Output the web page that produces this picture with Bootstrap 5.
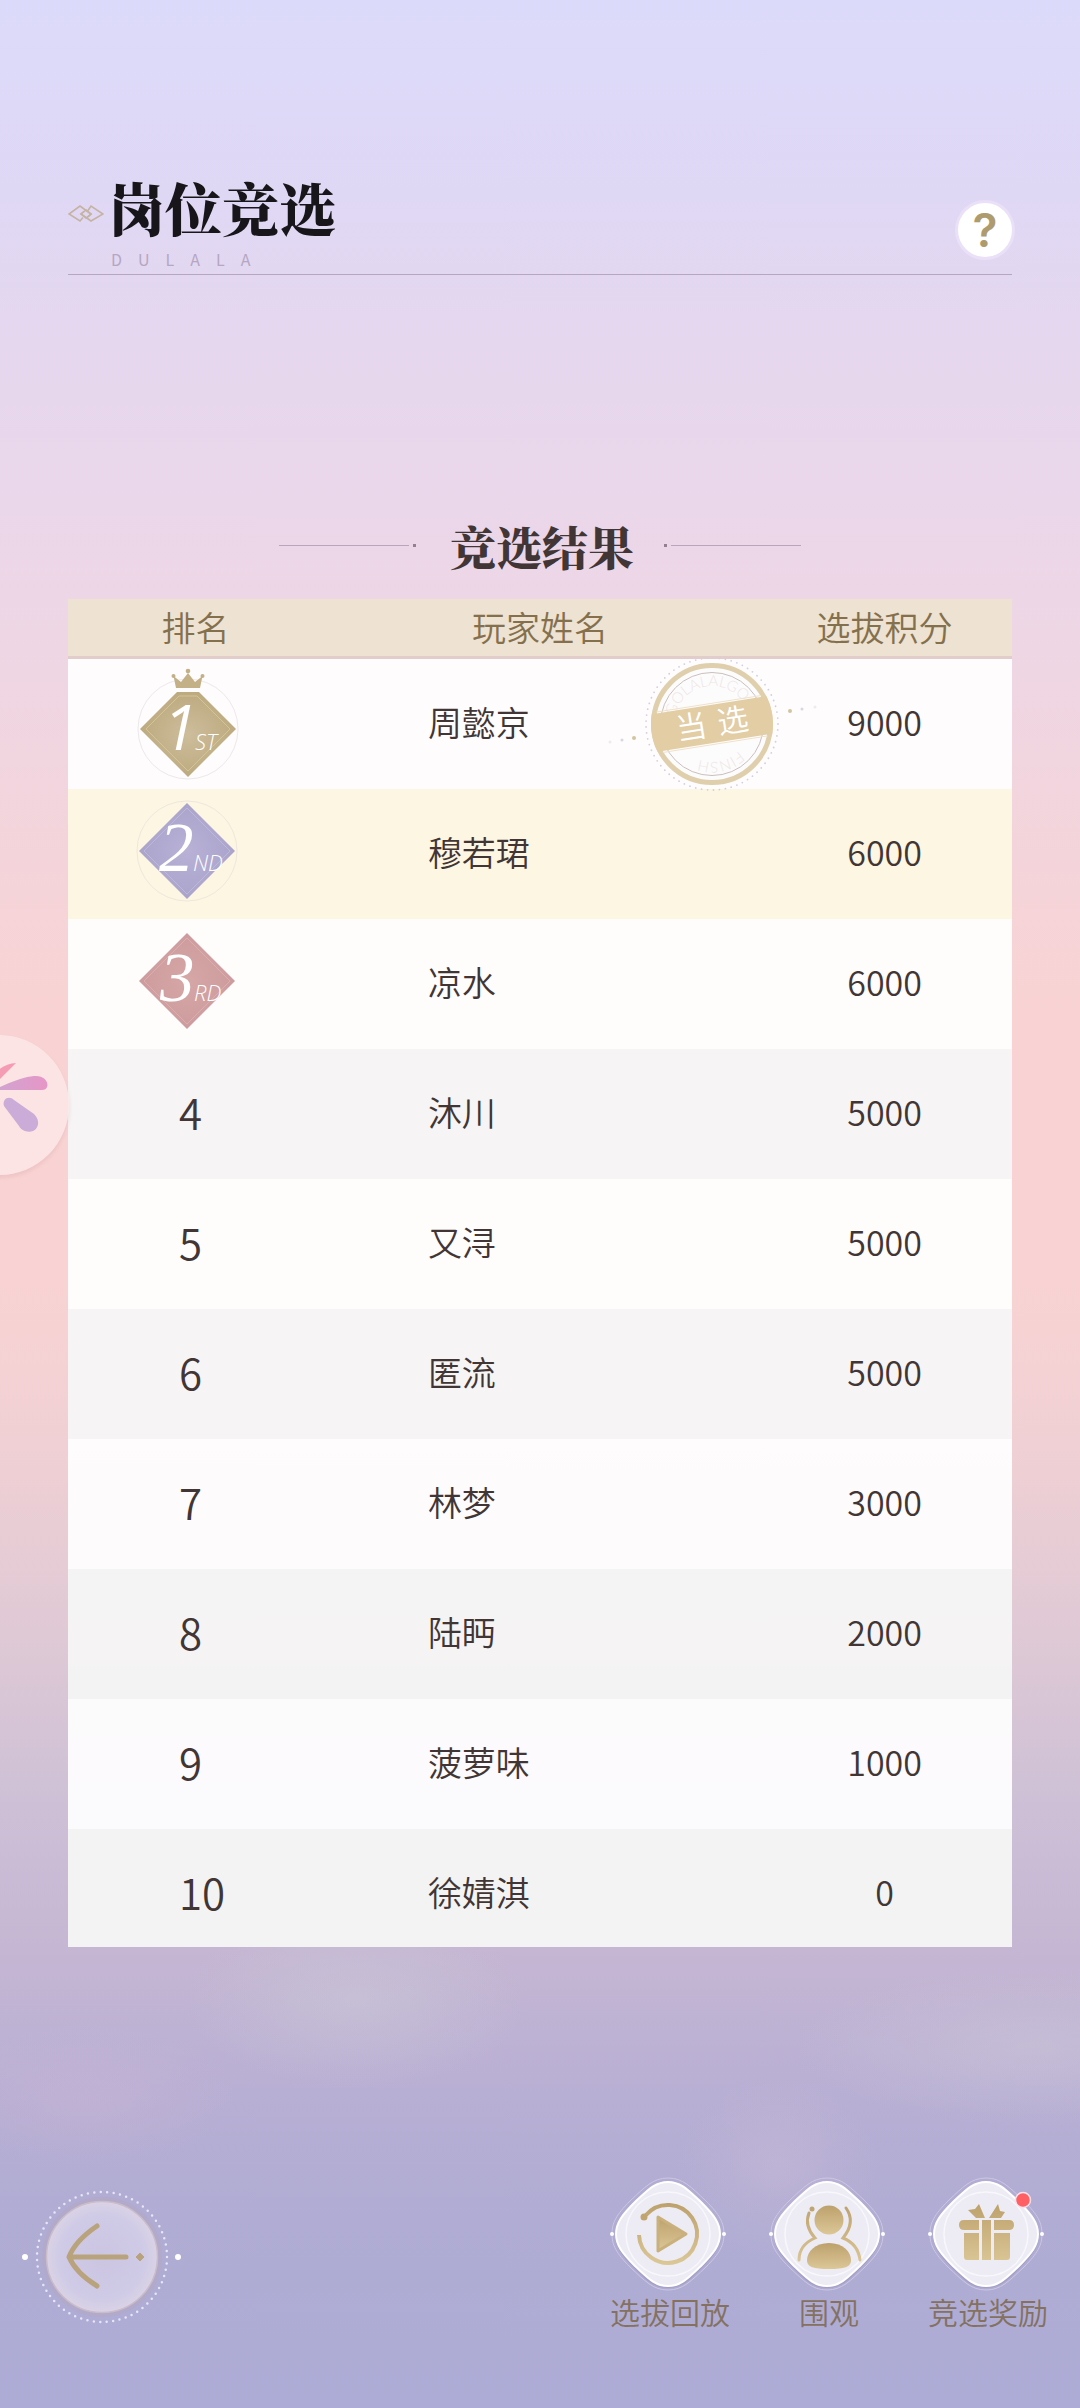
<!DOCTYPE html>
<html lang="zh-CN">
<head>
<meta charset="utf-8">
<meta name="viewport" content="width=device-width, initial-scale=1">
<title>岗位竞选</title>
<link rel="stylesheet" href="https://cdn.jsdelivr.net/npm/bootstrap@5.3.0/dist/css/bootstrap.min.css">
<style>
:root{--ink:#413535;--gold:#84704c}
body{font-family:"Noto Sans CJK SC","Noto Sans",sans-serif;color:var(--ink);overflow-x:hidden;
 background:
 radial-gradient(ellipse 170px 90px at 33% 83%,rgba(205,205,216,.45),transparent),
 radial-gradient(ellipse 240px 80px at 96% 85%,rgba(205,200,216,.5),transparent),
 radial-gradient(ellipse 100px 90px at 72% 90%,rgba(200,186,215,.5),transparent),
 radial-gradient(ellipse 150px 70px at 8% 87%,rgba(200,180,212,.5),transparent),
 linear-gradient(#dcdafa 0%,#dfd8f5 8%,#e4d7ef 13%,#ead7eb 20%,#efd6e3 28%,#f4d4da 36%,#f9d3d3 42%,#f9d3d3 53%,#f0d0d4 60%,#e1cad5 67%,#cdc0d6 75%,#c5b6d3 81%,#b8afd4 87%,#b0acd3 92%,#adacd6 100%)}
.serif-title{font-family:"Noto Serif CJK SC","Noto Sans CJK SC",serif;font-weight:900}
.page-wrap{padding:174px 68px 0}
.head-bar{border-bottom:1px solid #b7a5c4;padding-bottom:5px}
.head-name{font-size:57px;line-height:64px;color:#18161a}
.head-sub{font-size:16px;line-height:20px;letter-spacing:16px;color:#b5a6c2;margin:11px 0 0 43px}
.help-btn{width:60px;height:60px;border-radius:50%;border:3px solid #eae0f7;background:#fff;color:#ae9b6e;font:600 46px/54px Inter,sans-serif;margin:0 -3px 9px 0}
.result-head{margin-top:240px;margin-bottom:24px;gap:30px}
.result-name{font-size:46px;line-height:60px}
.rule-line{width:130px;height:1px;background:#b9a4bb}
.rule-dot{width:3px;height:3px;background:#937f90}
.rank-table{table-layout:fixed}
.rank-table th{height:60px;padding:0 0 4px;background:#eee2d2;box-shadow:inset 0 -3px #e3cdcb;color:var(--gold);font-weight:350;font-size:34px;line-height:50px;text-align:center}
.rank-table td{height:130px;padding:0 0 4px;font-weight:350;font-size:34px;line-height:50px;background:rgba(255,255,255,.92)}
.rank-table tbody tr:nth-child(n+4):nth-child(even) td{background:rgba(245,245,246,.95)}
.rank-table tbody tr.is-me td{background:#fdf6e2}
.rank-table tbody tr:last-child td{height:118px;padding-top:12px}
.rank-table .rank-num{padding-left:111px;font-size:42px}
.rank-table .player{padding-left:105px}
.rank-table .medal-cell{padding:0 0 0 67px}
.stamp{left:281px;top:0}
.float-ball{left:-71px;top:1035px;width:140px;height:140px;border-radius:50%;background:rgba(252,231,230,.84);box-shadow:0 3px 4px rgba(200,140,150,.22)}
.foot-bar{padding:0 32px 77px 20px}
.act-btn{width:120px}
.act-btn span{font-weight:350;font-size:30px;line-height:40px;color:#84715f}
.back-btn{margin-top:12px}
</style>
<script src="https://cdn.jsdelivr.net/npm/bootstrap@5.3.0/dist/js/bootstrap.bundle.min.js"></script>
</head>
<body class="d-flex flex-column min-vh-100 position-relative">
<svg width="0" height="0" class="position-absolute" aria-hidden="true">
 <defs>
  <linearGradient id="gold" x1="0" y1="0" x2="0" y2="1"><stop offset="0" stop-color="#bda16c"/><stop offset="1" stop-color="#dcc797"/></linearGradient>
  <linearGradient id="goldTall" gradientUnits="userSpaceOnUse" x1="0" y1="26" x2="0" y2="88"><stop offset="0" stop-color="#bda16c"/><stop offset="1" stop-color="#dcc797"/></linearGradient>
  <radialGradient id="m1"><stop offset="0" stop-color="#cdbd9b"/><stop offset="1" stop-color="#bdaa80"/></radialGradient>
  <radialGradient id="m2"><stop offset="0" stop-color="#b9b1d6"/><stop offset="1" stop-color="#aaa4cb"/></radialGradient>
  <radialGradient id="m3"><stop offset="0" stop-color="#d6a7a7"/><stop offset="1" stop-color="#cd9b9d"/></radialGradient>
  <radialGradient id="ball"><stop offset="0" stop-color="#cbc5e2"/><stop offset=".75" stop-color="#cfcae6"/><stop offset="1" stop-color="#dad3e6"/></radialGradient>
  <g id="plate">
   <path d="M58 1C73 1 81 10 96 24C110 38 114 46 114 57S110 76 96 90C81 104 73 113 58 113S35 104 20 90C6 76 2 68 2 57S6 38 20 24C35 10 43 1 58 1Z" fill="none" stroke="#cdc7e4" stroke-width="1"/>
   <path d="M58 6C72 6 79 14 92 27C105 40 111 47 111 58S105 78 92 91C79 104 72 111 58 111S37 104 24 91C11 78 5 69 5 58S11 40 24 27C37 14 44 6 58 6Z" fill="#9b94b8" opacity=".55"/>
   <path d="M58 5C71 5 78 13 91 25C104 38 110 46 110 57S104 76 91 89C78 101 71 109 58 109S38 101 25 89C12 76 6 68 6 57S12 38 25 25C38 13 45 5 58 5Z" fill="#edecf4" stroke="#fff" stroke-width="2"/>
   <circle cx="58" cy="57" r="42" fill="none" stroke="#f8f7fb" stroke-width="1.5"/>
   <circle cx="2" cy="57" r="2" fill="#fff"/><circle cx="114" cy="57" r="2" fill="#fff"/>
  </g>
 </defs>
</svg>

<main class="page-wrap">
 <header class="head-bar d-flex justify-content-between align-items-end">
  <div>
   <div class="d-flex align-items-center">
    <svg width="36" height="20" viewBox="0 0 36 20" class="mt-3" fill="none" stroke="#c5b3a2" stroke-width="1.6" aria-hidden="true"><path d="M15 13.5L12 17L1 10L12 2L23 10L18 14L13 10L16 7.500"/><path d="M20 6.500L23 2L35 10L23 17L13 10L18 6L23 10L20 13"/></svg>
    <h1 class="serif-title head-name mb-0 ms-1">岗位竞选</h1>
   </div>
   <p class="head-sub">DULALA</p>
  </div>
  <button type="button" class="help-btn p-0" aria-label="帮助">?</button>
 </header>

 <div class="result-head d-flex justify-content-center align-items-center">
  <div class="d-flex align-items-center gap-1"><span class="rule-line"></span><span class="rule-dot"></span></div>
  <h2 class="serif-title result-name mb-0 ms-1">竞选结果</h2>
  <div class="d-flex align-items-center gap-1"><span class="rule-dot"></span><span class="rule-line"></span></div>
 </div>

 <table class="rank-table w-100">
  <colgroup><col style="width:27%"><col><col style="width:27%"></colgroup>
  <thead><tr><th scope="col">排名</th><th scope="col">玩家姓名</th><th scope="col">选拔积分</th></tr></thead>
  <tbody>
   <tr>
    <td class="medal-cell"><svg class="d-block" width="106" height="122" viewBox="0 0 106 122" role="img" aria-label="第一名">
     <circle cx="53" cy="66" r="50" fill="none" stroke="#eee8ea"/>
     <path d="M42 29H64L101 66L53 114L5 66Z" fill="url(#m1)"/><path d="M44 33H62L95 66L53 108L11 66Z" fill="none" stroke="#d3c493"/>
     <path d="M41 25L38.500 13L46 19L53 10L60 19L67.500 13L65 25Z" fill="#c3b087"/><circle cx="53" cy="8" r="2.300" fill="#c3b087"/><circle cx="38.500" cy="13" r="2" fill="#c3b087"/><circle cx="67.500" cy="13" r="2" fill="#c3b087"/>
     <text x="28" y="87" font-family="Open Sans,sans-serif" font-style="italic" font-weight="400" font-size="62" fill="#fff">1</text>
     <text x="60" y="87" font-family="Open Sans,sans-serif" font-style="italic" font-weight="300" font-size="22" fill="#fff">ST</text>
    </svg></td>
    <td class="player position-relative">周懿京
     <svg class="stamp position-absolute" width="216" height="130" viewBox="-108 -65 216 130" overflow="visible" role="img" aria-label="当选">
      <path id="arc" d="M-38 0A38 38 0 0 1 38 0A38 38 0 0 1 -38 0" fill="none"/>
      <circle r="66" fill="none" stroke="#d3cfdf" stroke-width="1.800" stroke-linecap="round" stroke-dasharray="0 6"/>
      <circle r="58.500" fill="#fdfcfd" stroke="#e0cfac" stroke-width="5"/>
      <circle r="51.500" fill="none" stroke="#cbbfbe"/>
      <g font-family="Lato,sans-serif" font-size="15" fill="#eee6e4"><text><textPath href="#arc" startOffset="8">GOLALALGO</textPath></text><text><textPath href="#arc" startOffset="149">FINSH</textPath></text></g>
      <g transform="rotate(-9)"><path d="M-58 -19H58Q64 0 58 19H-58Q-64 0 -58 -19Z" fill="#e2cda5"/><path d="M-53 -20.500H53M-53 20.500H53" stroke="#efe2ca"/>
       <text y="11" text-anchor="middle" font-size="31" font-weight="350" fill="#fff"><tspan x="-21">当</tspan><tspan x="21">选</tspan></text></g>
      <g fill="#d3c4a0"><circle cx="-78" cy="14" r="2"/><circle cx="78" cy="-13" r="2"/></g>
      <g fill="#d9d6df"><circle cx="-90" cy="16" r="1.500"/><circle cx="90" cy="-15" r="1.500"/></g><g fill="#eeebef"><circle cx="-102" cy="18" r="1.500"/><circle cx="103" cy="-17" r="1.500"/></g>
     </svg></td>
    <td class="text-center">9000</td>
   </tr>
   <tr class="is-me">
    <td class="medal-cell"><svg class="d-block" width="106" height="122" viewBox="0 0 106 122" role="img" aria-label="第二名">
     <circle cx="52" cy="58" r="50" fill="none" stroke="#eee7df"/>
     <path d="M52 10L100 58L52 106L4 58Z" fill="url(#m2)"/><path d="M52 15L95 58L52 101L9 58Z" fill="none" stroke="#bdb8d9"/>
     <text x="24" y="78" font-family="Liberation Serif,serif" font-style="italic" font-size="69" fill="#fff">2</text>
     <text x="58" y="78" font-family="Open Sans,sans-serif" font-style="italic" font-weight="300" font-size="22" fill="#fff">ND</text>
    </svg></td>
    <td class="player">穆若珺</td><td class="text-center">6000</td>
   </tr>
   <tr>
    <td class="medal-cell"><svg class="d-block" width="106" height="122" viewBox="0 0 106 122" role="img" aria-label="第三名">
     <path d="M52 10L100 58L52 106L4 58Z" fill="url(#m3)"/><path d="M52 15L95 58L52 101L9 58Z" fill="none" stroke="#daadae"/>
     <text x="25" y="78" font-family="Liberation Serif,serif" font-style="italic" font-size="69" fill="#fff">3</text>
     <text x="59" y="78" font-family="Open Sans,sans-serif" font-style="italic" font-weight="300" font-size="22" fill="#fff">RD</text>
    </svg></td>
    <td class="player">凉水</td><td class="text-center">6000</td>
   </tr>
   <tr><td class="rank-num">4</td><td class="player">沐川</td><td class="text-center">5000</td></tr>
   <tr><td class="rank-num">5</td><td class="player">又浔</td><td class="text-center">5000</td></tr>
   <tr><td class="rank-num">6</td><td class="player">匿流</td><td class="text-center">5000</td></tr>
   <tr><td class="rank-num">7</td><td class="player">林梦</td><td class="text-center">3000</td></tr>
   <tr><td class="rank-num">8</td><td class="player">陆眄</td><td class="text-center">2000</td></tr>
   <tr><td class="rank-num">9</td><td class="player">菠萝味</td><td class="text-center">1000</td></tr>
   <tr><td class="rank-num">10</td><td class="player">徐婧淇</td><td class="text-center">0</td></tr>
  </tbody>
 </table>
</main>

<button type="button" class="float-ball position-absolute border-0 p-0" aria-label="悬浮菜单">
 <svg class="d-block" width="140" height="140" viewBox="-71 0 140 140" aria-hidden="true">
  <defs><linearGradient id="petal"><stop offset="0" stop-color="#cfa5d2"/><stop offset="1" stop-color="#e696c6"/></linearGradient></defs>
  <path d="M-14 54Q-4 29 16 28Q8 36 -2 46Z" fill="#f59bb4"/>
  <path d="M-6 55Q20 42 34 41C44 40 49 47 47 52Q46 55 42 55Z" fill="url(#petal)"/>
  <path d="M4 71C2 64 9 60 14 65L34 79C41 86 38 94 33 96C27 98 21 95 19 91Z" fill="#cbabd8"/>
 </svg>
</button>

<footer class="foot-bar mt-auto d-flex justify-content-between align-items-start">
 <button type="button" class="back-btn btn border-0 p-0" aria-label="返回">
  <svg class="d-block" width="164" height="136" viewBox="-82 -68 164 136" aria-hidden="true">
   <circle r="65" fill="none" stroke="#e9e5f6" stroke-width="2.500" stroke-linecap="round" stroke-dasharray="0 6.480"/>
   <circle r="58" fill="none" stroke="#b4a8c4" stroke-width="4" opacity=".6"/>
   <circle r="55.500" fill="url(#ball)" stroke="#cbbcc9" stroke-width="1.500"/>
   <path d="M-5 -31Q-27 -16 -33 0Q-26 16 -5 29M-32 0H24" fill="none" stroke="#b9a37d" stroke-width="5" stroke-linecap="round" stroke-linejoin="round"/>
   <path d="M38 -4L42 0L38 4L34 0Z" fill="#b9a37d" stroke="#b9a37d"/>
   <circle cx="-77" r="3" fill="#fff"/><circle cx="76" r="3" fill="#fff"/>
  </svg>
 </button>
 <nav class="d-flex" style="gap:39px" aria-label="竞选操作">
  <button type="button" class="act-btn btn border-0 p-0 text-nowrap">
   <svg class="d-block" width="120" height="114" viewBox="0 0 120 114" aria-hidden="true"><use href="#plate"/>
    <path d="M36 38A29 29 0 1 1 29 58" fill="none" stroke="url(#goldTall)" stroke-width="4"/><circle cx="34" cy="40" r="3.500" fill="#c0a571"/>
    <path d="M48 40L76 57L48 74Z" fill="url(#gold)" stroke="#c9b07d" stroke-width="3" stroke-linejoin="round"/></svg>
   <span>选拔回放</span>
  </button>
  <button type="button" class="act-btn btn border-0 p-0 text-nowrap">
   <svg class="d-block" width="120" height="114" viewBox="0 0 120 114" aria-hidden="true"><use href="#plate"/>
    <circle cx="60" cy="43" r="14.500" fill="url(#gold)"/><path d="M60 66C74 66 82 75 82 83C82 90 76 92 60 92S38 90 38 83C38 75 46 66 60 66Z" fill="url(#gold)"/>
    <path d="M40 36Q35 49 46 61Q30 68 30 83M77 31Q87 45 74 61Q89 67 91 83" fill="none" stroke="url(#goldTall)" stroke-width="3" stroke-linecap="round"/><circle cx="43" cy="32" r="2.500" fill="#c0a571"/></svg>
   <span>围观</span>
  </button>
  <button type="button" class="act-btn btn border-0 p-0 text-nowrap">
   <svg class="d-block" width="120" height="114" viewBox="0 0 120 114" aria-hidden="true"><use href="#plate"/>
    <g fill="url(#goldTall)"><path d="M48 41L40 33L47 32L51 27L57 41ZM61 41L70 27L72 34L77 35L73 41Z"/><path d="M36 43H51V53H36Q31 53 31 48T36 43ZM66 43H81Q86 43 86 48T81 53H66ZM54 43H63V83H54ZM36 56H51V83H39Q36 83 36 80ZM66 56H82V80Q82 83 79 83H66Z"/></g>
    <circle cx="95" cy="23" r="7.500" fill="#ff6064" stroke="#f9e3ec" stroke-width="1.500"/></svg>
   <span>竞选奖励</span>
  </button>
 </nav>
</footer>
</body>
</html>
